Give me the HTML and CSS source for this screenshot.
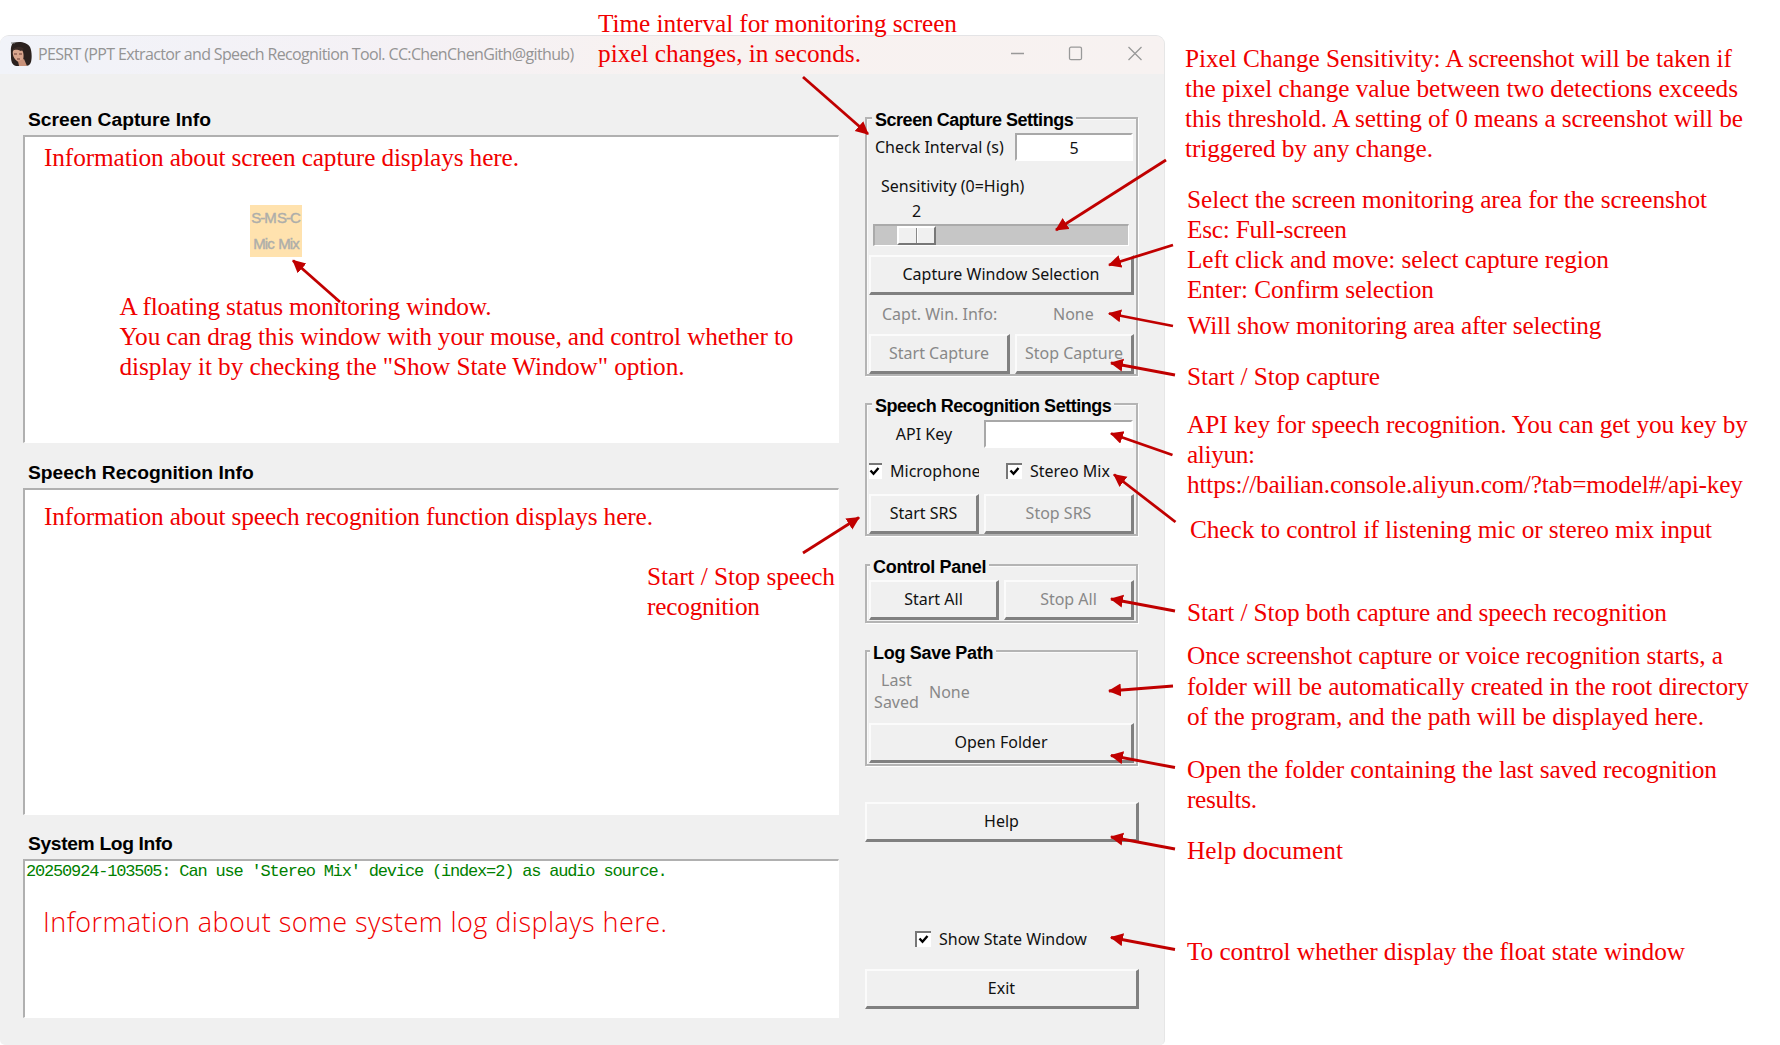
FILE: index.html
```html
<!DOCTYPE html>
<html lang="en">
<head>
<meta charset="utf-8">
<title>PESRT guide</title>
<link rel="stylesheet" href="styles.css">
</head>
<body>
<main class="guide">
  <div class="window">
    <header class="titlebar">
      <svg class="avatar" width="22" height="24" viewBox="0 0 22 24">
        <path d="M3 1C9-1 17 0 20 5c2 4 2 11 1 15-1 3-3 4-6 4H6c-4-1-5-5-5-9C1 10 0 4 3 1z" fill="#2b211e"/>
        <path d="M3 9c1-3 5-4 8-2 3 2 3 8 2 11-1 3-4 3-6 1-3-2-5-7-4-10z" fill="#d9a68e"/>
        <path d="M8 19l6-2 3 7H9z" fill="#c9927a"/>
        <path d="M3 9c1-4 7-6 11-2l-3 2c-3-1-6-2-8 0z" fill="#3a2a25"/>
        <path d="M4 12h3M9 12h3M7 17h3" stroke="#6b3b32" stroke-width="1"/>
        <path d="M1 1h4" stroke="#777" stroke-width="1"/>
      </svg>
      <span class="app-title">PESRT (PPT Extractor and Speech Recognition Tool. CC:ChenChenGith@github)</span>
      <svg class="win-controls" width="134" height="16" viewBox="0 0 134 16" fill="none" stroke="#999" stroke-width="1.3">
        <path d="M2 7.500h13"/>
        <rect x="60.500" y="1.200" width="12" height="12.500" rx="1.500"/>
        <path d="M119.500 1l13 13M132.500 1l-13 13"/>
      </svg>
    </header>
    <div class="body">
      <section class="logs">
        <h2 class="heading">Screen Capture Info</h2>
        <div class="textarea area-capture"></div>
        <h2 class="heading">Speech Recognition Info</h2>
        <div class="textarea area-speech"></div>
        <h2 class="heading heading-system">System Log Info</h2>
        <div class="textarea area-system">20250924-103505: Can use 'Stereo Mix' device (index=2) as audio source.</div>
      </section>
      <aside class="panel">
        <section class="group group-capture">
          <h3 class="legend">Screen Capture Settings</h3>
          <div class="row interval-row"><span class="label">Check Interval (s)</span><div class="entry interval">5</div></div>
          <div class="sensitivity">Sensitivity (0=High)</div>
          <div class="scale-value">2</div>
          <div class="track"><div class="thumb"></div></div>
          <div class="button">Capture Window Selection</div>
          <div class="row info-row disabled"><span class="info-name">Capt. Win. Info:</span><span class="info-value">None</span></div>
          <div class="row"><div class="button disabled w141">Start Capture</div><div class="button disabled grow">Stop Capture</div></div>
        </section>
        <section class="group group-speech">
          <h3 class="legend">Speech Recognition Settings</h3>
          <div class="row"><span class="api-label">API Key</span><div class="entry api"></div></div>
          <div class="row checks">
            <div class="check mic"><svg class="box" viewBox="0 0 16 16"><path d="M0 0h16v16H0z" fill="#fff"/><path d="M1 16V1h15" fill="none" stroke="#777" stroke-width="2"/><path d="M4.500 7.500l3 3.200 5-5.700" fill="none" stroke="#000" stroke-width="2.400"/></svg><span>Microphone</span></div>
            <div class="check"><svg class="box" viewBox="0 0 16 16"><path d="M0 0h16v16H0z" fill="#fff"/><path d="M1 16V1h15" fill="none" stroke="#777" stroke-width="2"/><path d="M4.500 7.500l3 3.200 5-5.700" fill="none" stroke="#000" stroke-width="2.400"/></svg><span>Stereo Mix</span></div>
          </div>
          <div class="row"><div class="button w110">Start SRS</div><div class="button disabled grow">Stop SRS</div></div>
        </section>
        <section class="group group-control">
          <h3 class="legend legend-left">Control Panel</h3>
          <div class="row"><div class="button w130">Start All</div><div class="button disabled grow">Stop All</div></div>
        </section>
        <section class="group group-path">
          <h3 class="legend legend-left">Log Save Path</h3>
          <div class="row path-row disabled"><span class="last-saved">Last<br>Saved</span><span>None</span></div>
          <div class="button">Open Folder</div>
        </section>
        <div class="button help">Help</div>
        <div class="check state-check"><svg class="box" viewBox="0 0 16 16"><path d="M0 0h16v16H0z" fill="#fff"/><path d="M1 16V1h15" fill="none" stroke="#777" stroke-width="2"/><path d="M4.500 7.500l3 3.200 5-5.700" fill="none" stroke="#000" stroke-width="2.400"/></svg><span>Show State Window</span></div>
        <div class="button exit">Exit</div>
      </aside>
    </div>
  </div>

  <div class="float-window"><span>S-M</span><span>S-C</span><span>Mic</span><span>Mix</span></div>

  <svg class="notes" width="1780" height="1045" viewBox="0 0 1780 1045">
    <defs>
      <marker id="head" markerUnits="userSpaceOnUse" markerWidth="14" markerHeight="14" refX="12" refY="6.500" orient="auto"><path d="M0 0l13 6.500L0 13z" fill="#c00000"/></marker>
    </defs>
    <g class="arrows" marker-end="url(#head)">
      <path d="M803 77L868 134"/>
      <path d="M1166 160L1056 230"/>
      <path d="M1173 245L1109 265"/>
      <path d="M1173 326L1109 313.500"/>
      <path d="M1175 375L1111 363"/>
      <path d="M1172.500 455L1111 433.500"/>
      <path d="M1175.500 522L1114 474.500"/>
      <path d="M1175 611L1111 599"/>
      <path d="M1173 686L1109 691"/>
      <path d="M1175 767.500L1111 755.500"/>
      <path d="M1175 849L1111 837"/>
      <path d="M1175 949.500L1111 937.500"/>
      <path d="M340 302L293 260.500"/>
      <path d="M803 553L859 517.500"/>
    </g>
    <g class="note">
      <text x="598" y="32" textLength="359">Time interval for monitoring screen</text>
      <text x="598" y="62" textLength="263">pixel changes, in seconds.</text>
      <text x="44" y="166" textLength="475">Information about screen capture displays here.</text>
      <text x="119.500" y="315" textLength="372">A floating status monitoring window.</text>
      <text x="119.500" y="345" textLength="674">You can drag this window with your mouse, and control whether to</text>
      <text x="119.500" y="375" textLength="565">display it by checking the "Show State Window" option.</text>
      <text x="44" y="525" textLength="609">Information about speech recognition function displays here.</text>
      <text x="647" y="584.700" textLength="188">Start / Stop speech</text>
      <text x="647" y="614.800" textLength="113">recognition</text>

      <text x="1185" y="67" textLength="547">Pixel Change Sensitivity: A screenshot will be taken if</text>
      <text x="1185" y="97" textLength="553">the pixel change value between two detections exceeds</text>
      <text x="1185" y="127" textLength="558">this threshold. A setting of 0 means a screenshot will be</text>
      <text x="1185" y="157" textLength="248">triggered by any change.</text>
      <text x="1187" y="208" textLength="520">Select the screen monitoring area for the screenshot</text>
      <text x="1187" y="238" textLength="160">Esc: Full-screen</text>
      <text x="1187" y="268" textLength="422">Left click and move: select capture region</text>
      <text x="1187" y="298" textLength="247">Enter: Confirm selection</text>
      <text x="1187.500" y="334" textLength="414">Will show monitoring area after selecting</text>
      <text x="1187" y="385" textLength="193">Start / Stop capture</text>
      <text x="1187" y="433" textLength="561">API key for speech recognition. You can get you key by</text>
      <text x="1187" y="463.400" textLength="68">aliyun:</text>
      <text x="1187" y="493.400" textLength="556">https://bailian.console.aliyun.com/?tab=model#/api-key</text>
      <text x="1190" y="538.400" textLength="522">Check to control if listening mic or stereo mix input</text>
      <text x="1187" y="621.400" textLength="480">Start / Stop both capture and speech recognition</text>
      <text x="1187" y="664.400" textLength="536">Once screenshot capture or voice recognition starts, a</text>
      <text x="1187" y="694.700" textLength="562">folder will be automatically created in the root directory</text>
      <text x="1187" y="725" textLength="517">of the program, and the path will be displayed here.</text>
      <text x="1187" y="778" textLength="530">Open the folder containing the last saved recognition</text>
      <text x="1187" y="808" textLength="70">results.</text>
      <text x="1187" y="859" textLength="156">Help document</text>
      <text x="1187" y="960" textLength="498">To control whether display the float state window</text>
    </g>
    <text class="note-sans" x="43" y="931.500" textLength="624">Information about some system log displays here.</text>
  </svg>
</main>
</body>
</html>
```
FILE: styles.css
```css
* { box-sizing: border-box; }
body { margin: 0; background: #fff; }
h2, h3 { margin: 0; }
.guide {
  position: relative;
  width: 1780px;
  height: 1045px;
  padding-top: 35px;
  overflow: hidden;
}
.window {
  width: 1165px;
  height: 1010px;
  background: #f0f0f0;
  border-top: 1px solid #e4e4e6;
  border-right: 1px solid #e6e6e6;
  border-radius: 9px 9px 5px 5px;
  overflow: hidden;
  font: 16px/20px "Noto Sans", "Open Sans", sans-serif;
  color: #111;
}
.titlebar {
  display: flex;
  align-items: center;
  height: 38px;
  padding: 0 21px 2px 10px;
  background: linear-gradient(90deg, #f1f3f9, #f5f1f5 36%, #f8f2f0 60%, #f7f2f1);
}
.app-title {
  margin-left: 6px;
  font-family: "Open Sans", sans-serif;
  font-size: 16px;
  letter-spacing: -0.64px;
  color: #949494;
  white-space: nowrap;
}
.win-controls { margin-left: auto; }
.body { display: flex; padding-left: 23px; }
.logs { width: 816px; padding-top: 33px; }
.heading {
  height: 28px;
  padding-left: 5px;
  font: bold 19.25px/25px "Liberation Sans", Arial, sans-serif;
  color: #000;
}
.heading-system { letter-spacing: -0.35px; }
.textarea {
  border: 2px solid #b0b0b0;
  border-right: 1px solid #fff;
  border-bottom: 1px solid #fff;
  background: #fff;
}
.area-capture { height: 308px; margin-bottom: 17px; }
.area-speech { height: 327px; margin-bottom: 16px; }
.area-system {
  height: 159px;
  padding-left: 1px;
  font: 17px/22px "Liberation Mono", monospace;
  letter-spacing: -1.18px;
  color: #008000;
  white-space: pre;
}
.panel { width: 274px; margin-left: 26px; padding-top: 43px; }
.group {
  width: 273px;
  border: 2px solid #b4b4b4;
  box-shadow: 1px 1px #fff, inset 1px 1px #fafafa;
  padding: 0 2px 0 2px;
}
.legend {
  width: max-content;
  height: 14px;
  margin: -12px 0 2px 3px;
  padding: 0 3px;
  font: bold 18px/26px "Liberation Sans", Arial, sans-serif;
  letter-spacing: -0.47px;
  color: #000;
  background: #f0f0f0;
}
.legend-left { margin-left: 1px; letter-spacing: -0.3px; }
.row { display: flex; gap: 5px; }
.grow { flex: 1; }
.button {
  display: flex;
  align-items: center;
  justify-content: center;
  height: 40px;
  padding-bottom: 1px;
  border: 2px solid #fbfbfb;
  border-right: 3px solid #808080;
  border-bottom: 3px solid #808080;
  white-space: nowrap;
}
.disabled { color: #888; }
.w141 { width: 141px; }
.w110 { width: 110px; }
.w130 { width: 130px; }
.entry {
  height: 28px;
  border: 2px solid #a8a8a8;
  border-right-color: #fff;
  border-bottom-color: #fff;
  background: #fff;
  text-align: center;
  line-height: 26px;
}
.group-capture { height: 259px; }
.interval-row { margin-top: 12px; }
.label { width: 141px; padding-left: 6px; line-height: 29px; white-space: nowrap; }
.interval { width: 118px; }
.sensitivity { margin-top: 14px; padding-left: 12px; line-height: 20px; }
.scale-value { margin-top: 5px; padding-left: 43px; line-height: 20px; }
.track {
  width: 256px;
  height: 22px;
  margin: 3px 0 9px 4px;
  padding-left: 22px;
  border: 2px solid #aaa;
  border-right: 1px solid #fff;
  border-bottom: 1px solid #fff;
  background: #c6c6c6;
}
.thumb {
  width: 39px;
  height: 19px;
  background: linear-gradient(90deg, transparent 17px, #888 17px 18px, #fff 18px 19px, transparent 19px), #f0f0f0;
  border: 2px solid #fff;
  border-right-color: #777;
  border-bottom-color: #777;
}
.info-row { height: 39px; line-height: 39px; gap: 0; }
.info-name { width: 184px; padding-left: 13px; }
.group-speech { height: 133px; margin-top: 27px; }
.group-speech .legend { margin-bottom: 13px; }
.api-label { width: 110px; line-height: 28px; text-align: center; }
.api { width: 149px; }
.checks { height: 46px; align-items: center; gap: 27px; }
.check { display: flex; align-items: center; gap: 8px; white-space: nowrap; }
.mic { width: 110px; overflow: hidden; }
.mic .box { margin-left: -3px; }
.box { flex: none; width: 16px; height: 16px; }
.group-control { height: 59px; margin-top: 28px; }
.group-control .legend { margin-bottom: 12px; }
.group-path { height: 116px; margin-top: 27px; }
.path-row { height: 58px; margin-top: 11px; padding-bottom: 5px; align-items: center; gap: 8px; padding-left: 3px; }
.last-saved { width: 49px; text-align: center; line-height: 21.500px; }
.help { margin-top: 36px; }
.state-check { height: 24px; margin: 85px 0 18px 50px; }
.float-window {
  position: absolute;
  left: 250px;
  top: 205px;
  width: 52px;
  height: 52px;
  display: grid;
  grid-template-columns: 25px 25px;
  justify-content: center;
  text-align: center;
  background: #ffe2ae;
  color: #aeaeaa;
  font: 15px/26px "Liberation Sans", Arial, sans-serif;
  letter-spacing: -1px;
  -webkit-text-stroke: 0.4px #aeaeaa;
}
.notes { position: absolute; left: 0; top: 0; }
.arrows path { fill: none; stroke: #c00000; stroke-width: 2.8; }
.note { font: 25.3px "Liberation Serif", "Times New Roman", serif; fill: #f00000; }
.note-sans { font: 300 27px "Open Sans", sans-serif; fill: #f00000; }
```
